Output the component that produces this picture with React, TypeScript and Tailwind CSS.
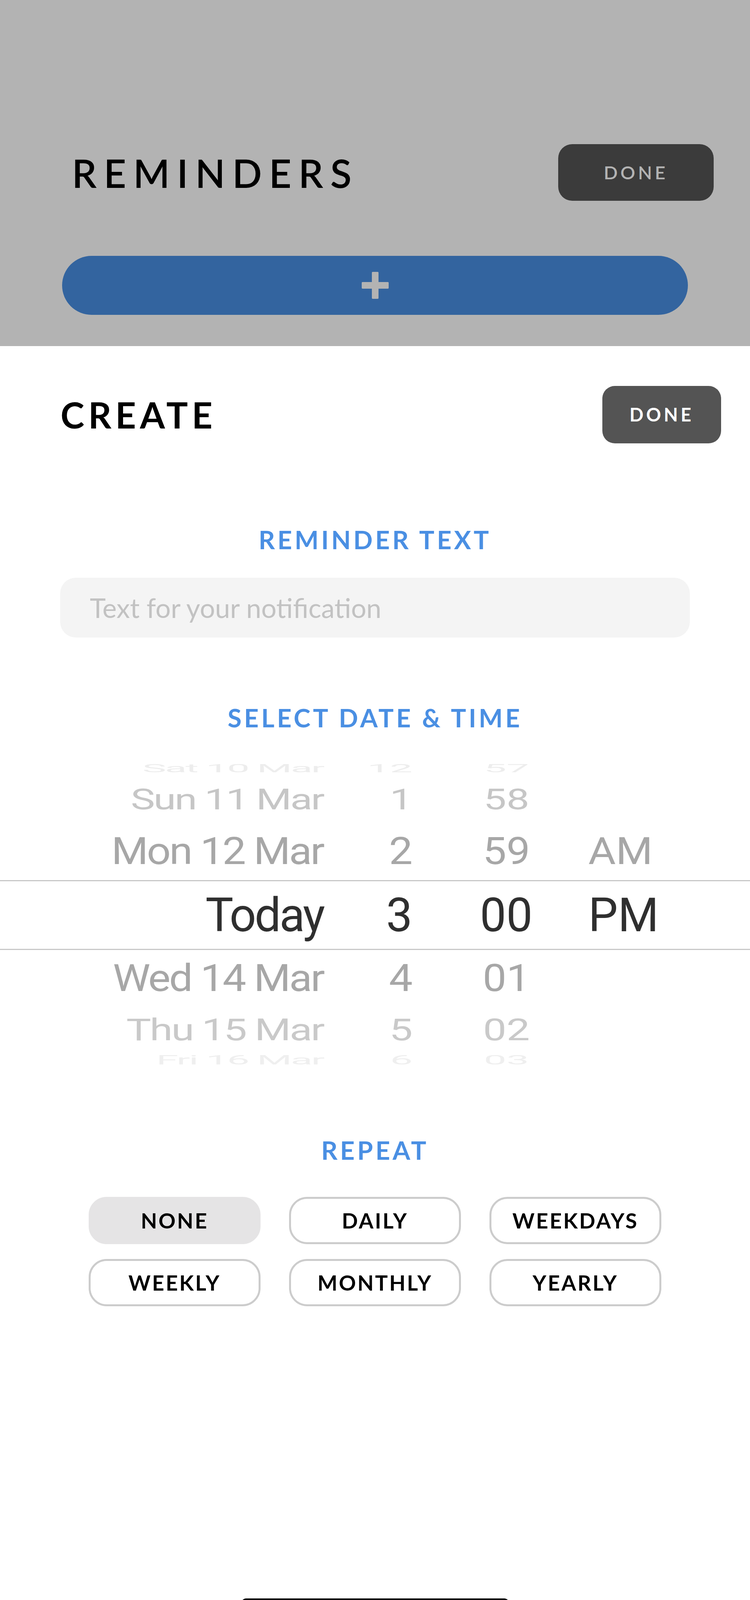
import React from "react";

type Row = {
  d: string;
  h: string;
  m: string;
  ap: string;
  rowCls: string;
  sx: string;
  color: string;
};

const rows: Row[] = [
  { d: "Sat 10 Mar", h: "12", m: "57", ap: "", rowCls: "h-[44px] scale-y-[0.25]", sx: "scale-x-[0.86]", color: "text-[#ededed]" },
  { d: "Sun 11 Mar", h: "1", m: "58", ap: "", rowCls: "h-[116px] scale-y-[0.62]", sx: "scale-x-[0.87]", color: "text-[#c6c6c6]" },
  { d: "Mon 12 Mar", h: "2", m: "59", ap: "AM", rowCls: "h-[148px] scale-y-[0.81]", sx: "scale-x-[0.9]", color: "text-[#a7a7a7]" },
  { d: "Today", h: "3", m: "00", ap: "PM", rowCls: "h-[179px] border-y-[3px] border-[#c8c8c8]", sx: "scale-x-100", color: "text-[#2f2f2f]" },
  { d: "Wed 14 Mar", h: "4", m: "01", ap: "", rowCls: "h-[144px] scale-y-[0.81]", sx: "scale-x-[0.9]", color: "text-[#a7a7a7]" },
  { d: "Thu 15 Mar", h: "5", m: "02", ap: "", rowCls: "h-[120px] scale-y-[0.65]", sx: "scale-x-[0.89]", color: "text-[#c9c9c9]" },
  { d: "Fri 16 Mar", h: "6", m: "03", ap: "", rowCls: "h-[36px] scale-y-[0.28]", sx: "scale-x-[0.86]", color: "text-[#efefef]" },
];

const repeatOpts = ["NONE", "DAILY", "WEEKDAYS", "WEEKLY", "MONTHLY", "YEARLY"];

const heading =
  "text-center text-[65px] leading-none font-bold tracking-[0.1em] text-[#4a8fe3] [font-family:Lato,'Open_Sans',sans-serif]";

export default function App() {
  return (
    <div className="w-[1920px] min-h-[4157px] bg-white flex flex-col [font-family:Lato,'Open_Sans',sans-serif]">
      {/* dimmed background screen */}
      <div className="h-[886px] bg-[#b3b3b3] flex flex-col shrink-0">
        <div className="flex items-center justify-between pl-[184px] pr-[93px] pt-[369px]">
          <h1 className="text-[100px] leading-none font-semibold tracking-[0.18em] text-black">REMINDERS</h1>
          <button className="w-[398px] h-[145px] rounded-[36px] bg-[#3b3b3b] text-[#b3b3b3] text-[47px] font-semibold tracking-[0.15em] flex items-center justify-center">
            DONE
          </button>
        </div>
        <div className="mt-[141px] mx-[159px] h-[151px] rounded-full bg-[#33649f] flex items-center justify-center">
          <svg width="69" height="69" viewBox="0 0 69 69">
            <rect x="26" y="0" width="17" height="69" rx="2" fill="#b3b3b3" />
            <rect x="0" y="26" width="69" height="17" rx="2" fill="#b3b3b3" />
          </svg>
        </div>
      </div>

      {/* sheet */}
      <div className="flex flex-col">
        <div className="flex items-center justify-between pl-[155px] pr-[74px] pt-[102px]">
          <h2 className="text-[92px] leading-none font-bold tracking-[0.11em] text-black">CREATE</h2>
          <button className="w-[304px] h-[147px] rounded-[32px] bg-[#545454] text-white text-[47px] font-bold tracking-[0.15em] flex items-center justify-center">
            DONE
          </button>
        </div>

        <div className={`${heading} mt-[214px]`}>REMINDER TEXT</div>

        <div className="mt-[65px] mx-[154px] h-[153px] rounded-[40px] bg-[#f4f4f4] flex items-center pl-[76px]">
          <span className="text-[69px] leading-none text-[#c2c2c2]">Text for your notification</span>
        </div>

        <div className={`${heading} mt-[173px]`}>SELECT DATE &amp; TIME</div>

        {/* wheel picker */}
        <div className="mt-[75px] flex flex-col [font-family:Roboto,'Liberation_Sans',sans-serif] text-[120px] leading-none">
          {rows.map((r, i) => (
            <div key={i} className={`flex items-center ${r.rowCls} ${r.color}`}>
              <div className="w-[828px] shrink-0 text-right tracking-[-0.035em]">
                <span className={`inline-block origin-right ${r.sx}`}>{r.d}</span>
              </div>
              <div className="w-[228px] shrink-0 text-right">
                <span className={`inline-block origin-right ${r.sx}`}>{r.h}</span>
              </div>
              <div className="ml-[100px] w-[280px] shrink-0 text-center">
                <span className={`inline-block origin-center ${r.sx}`}>{r.m}</span>
              </div>
              <div className="ml-[70px] shrink-0 text-left">
                <span className={`inline-block origin-left ${r.sx}`}>{r.ap}</span>
              </div>
            </div>
          ))}
        </div>

        <div className={`${heading} mt-[180px]`}>REPEAT</div>

        <div className="mt-[87px] mx-auto grid grid-cols-3 gap-x-[73px] gap-y-[38px]">
          {repeatOpts.map((o, i) => (
            <button
              key={o}
              className={`w-[440px] h-[121px] rounded-[46px] border-[5px] flex items-center justify-center text-[54px] leading-none font-bold tracking-[0.07em] text-black ${
                i === 0 ? "bg-[#e5e4e5] border-[#e5e4e5]" : "bg-white border-[#cccccc]"
              }`}
            >
              {o}
            </button>
          ))}
        </div>

        <div className="mt-[748px] mx-auto w-[685px] h-[24px] rounded-full bg-black" />
      </div>
    </div>
  );
}
